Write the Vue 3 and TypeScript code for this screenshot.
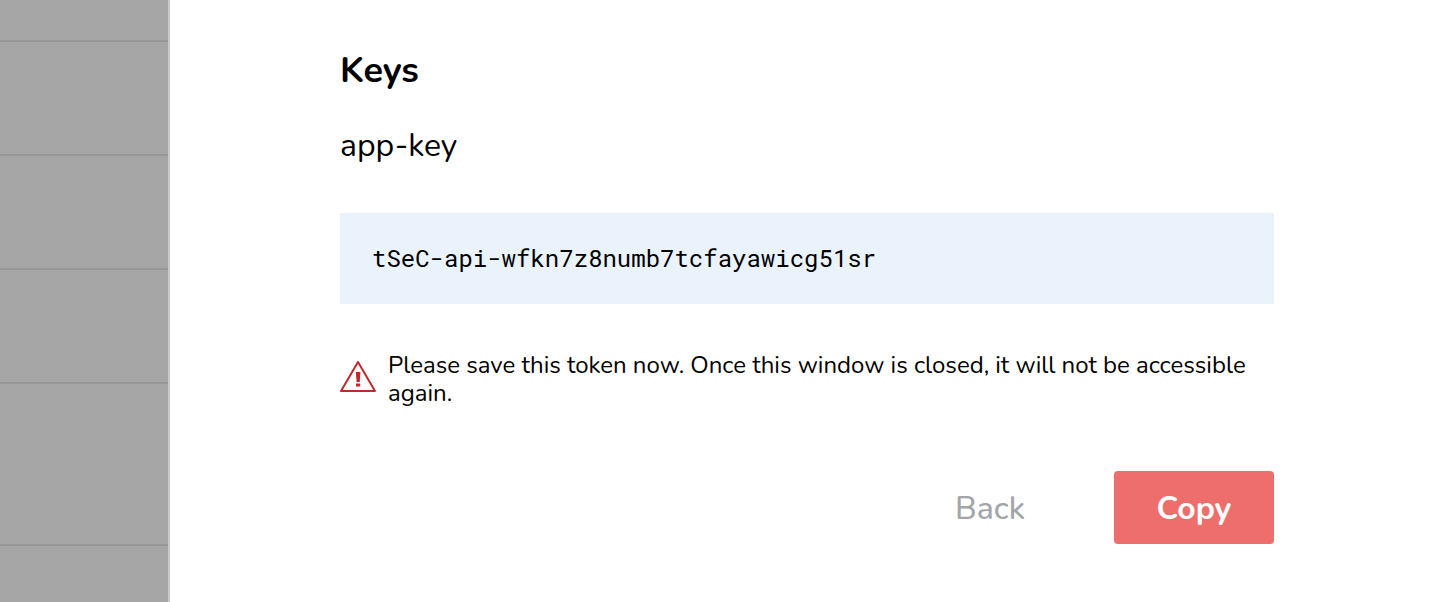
<script setup lang="ts">
import { ref } from 'vue'

const keyName = ref('app-key')
const token = ref('tSeC-api-wfkn7z8numb7tcfayawicg51sr')
const rowHeights: number[] = [42, 114, 114, 114, 162]

function copyToken(): void {
  navigator.clipboard?.writeText(token.value)
}
</script>

<template>
  <div class="page">
    <div class="backdrop" aria-hidden="true">
      <div v-for="(h, i) in rowHeights" :key="i" class="row" :style="{ height: h + 'px' }"></div>
    </div>
    <main class="panel">
      <h1 class="title">Keys</h1>
      <p class="name">{{ keyName }}</p>
      <div class="token"><code>{{ token }}</code></div>
      <div class="warning" role="alert">
        <svg class="icon" viewBox="0 0 36 32" aria-hidden="true">
          <path d="M18 2 L35 31 H1 Z" fill="none" stroke="#c5282c" stroke-width="2" stroke-linejoin="round" />
          <path d="M15.8 12h4.6l-.6 10h-3.2z M16 23.4h4.2v3.2H16z" fill="#c5282c" />
        </svg>
        <p class="message">Please save this token now. Once this window is closed, it will not be accessible again.</p>
      </div>
      <div class="actions">
        <button type="button" class="back">Back</button>
        <button type="button" class="copy" @click="copyToken">Copy</button>
      </div>
    </main>
  </div>
</template>

<style>
body {
  margin: 0;
  background: #fff;
}
</style>

<style scoped>
.page {
  display: flex;
  min-height: 100vh;
  color: #000;
  font-family: Nunito, "Open Sans", "Noto Sans", sans-serif;
}
.backdrop {
  box-sizing: border-box;
  flex: 0 0 170px;
  background: #a6a6a6;
  border-right: 2px solid #c9c9c9;
}
.row {
  box-sizing: border-box;
  border-bottom: 2px solid #979797;
}
.panel {
  flex: 1;
  min-width: 0;
  padding: 49px 168px 56px 170px;
}
.title {
  margin: 0;
  font-size: 36px;
  line-height: 44px;
  font-weight: 700;
}
.name {
  margin: 31px 0 0;
  font-size: 32px;
  line-height: 44px;
}
.token {
  margin-top: 45px;
  padding: 28px 32px;
  background: #eaf2fc;
}
.token code {
  display: block;
  font-family: "Roboto Mono", "DejaVu Sans Mono", monospace;
  font-size: 24px;
  line-height: 35px;
}
.warning {
  display: flex;
  align-items: flex-start;
  gap: 12px;
  margin-top: 47px;
}
.icon {
  flex: 0 0 36px;
  height: 32px;
  margin-top: 9px;
}
.message {
  margin: 0;
  font-size: 24px;
  line-height: 28px;
}
.actions {
  display: flex;
  justify-content: flex-end;
  gap: 48px;
  margin-top: 64px;
}
button {
  height: 73px;
  border: 0;
  border-radius: 4px;
  font-family: inherit;
  font-size: 32px;
  cursor: pointer;
}
.back {
  padding: 2px 41px 0;
  background: transparent;
  color: #a3a6a9;
  font-weight: 500;
}
.copy {
  width: 160px;
  padding: 2px 0 0;
  background: #ee6e6c;
  color: #fff;
  font-weight: 700;
}
</style>
